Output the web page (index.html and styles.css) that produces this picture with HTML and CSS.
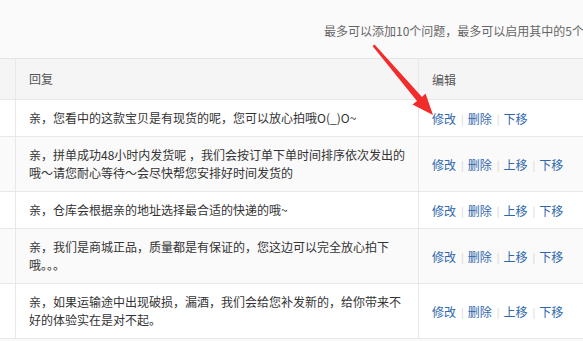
FILE: index.html
```html
<!DOCTYPE html>
<html lang="zh-CN">
<head>
<meta charset="utf-8">
<link rel="stylesheet" href="styles.css">
</head>
<body>
<div class="page">
  <div class="notice"><span>最多可以添加10个问题，最多可以启用其中的5个问题</span></div>
  <div class="table">
    <div class="row head">
      <div class="c-side"></div>
      <div class="c-main">回复</div>
      <div class="c-edit">编辑</div>
    </div>
    <div class="row">
      <div class="c-side"></div>
      <div class="c-main">亲，您看中的这款宝贝是有现货的呢，您可以放心拍哦O(_)O~</div>
      <div class="c-edit"><a>修改</a><i>|</i><a>删除</a><i>|</i><a>下移</a></div>
    </div>
    <div class="row alt">
      <div class="c-side"></div>
      <div class="c-main">亲，拼单成功48小时内发货呢 ，我们会按订单下单时间排序依次发出的哦～请您耐心等待～会尽快帮您安排好时间发货的</div>
      <div class="c-edit"><a>修改</a><i>|</i><a>删除</a><i>|</i><a>上移</a><i>|</i><a>下移</a></div>
    </div>
    <div class="row">
      <div class="c-side"></div>
      <div class="c-main">亲，仓库会根据亲的地址选择最合适的快递的哦~</div>
      <div class="c-edit"><a>修改</a><i>|</i><a>删除</a><i>|</i><a>上移</a><i>|</i><a>下移</a></div>
    </div>
    <div class="row alt">
      <div class="c-side"></div>
      <div class="c-main">亲，我们是商城正品，质量都是有保证的，您这边可以完全放心拍下哦。。。</div>
      <div class="c-edit"><a>修改</a><i>|</i><a>删除</a><i>|</i><a>上移</a><i>|</i><a>下移</a></div>
    </div>
    <div class="row">
      <div class="c-side"></div>
      <div class="c-main">亲，如果运输途中出现破损，漏酒，我们会给您补发新的，给你带来不好的体验实在是对不起。</div>
      <div class="c-edit"><a>修改</a><i>|</i><a>删除</a><i>|</i><a>上移</a><i>|</i><a>下移</a></div>
    </div>
  </div>
  <svg class="arrow" width="583" height="341" viewBox="0 0 583 341">
    <polygon points="372.5,46 374.5,44.5 422,97 425.5,93.5 433,115 412.5,104.5 417,101" fill="#f22b2b"/>
  </svg>
</div>
</body>
</html>
```
FILE: styles.css
```css
html, body {
  margin: 0;
  padding: 0;
}
body {
  background: #fafafa;
  font-family: "Noto Sans CJK SC", "Noto Sans", sans-serif;
  font-size: 12px;
  color: #333;
}
.page {
  position: relative;
  width: 583px;
  height: 341px;
  overflow: hidden;
}
.notice {
  height: 58px;
  display: flex;
  justify-content: flex-start;
  align-items: center;
  padding-left: 324px;
  padding-top: 2px;
  box-sizing: border-box;
  color: #666;
  white-space: nowrap;
  overflow: hidden;
}
.table {
  border-top: 1px solid #e6e6e6;
  background: #fff;
}
.row {
  display: flex;
  border-bottom: 1px solid #e8e8e8;
  background: #fff;
}
.row.alt {
  background: #fafafa;
}
.row.head {
  background: #f5f5f5;
  height: 40px;
  color: #555;
}
.row.head .c-main,
.row.head .c-edit {
  padding-top: 0;
  padding-bottom: 0;
  align-items: center;
}
.c-side {
  width: 15px;
  flex: none;
  border-right: 1px solid #e8e8e8;
}
.c-main {
  width: 376px;
  flex: none;
  padding: 9px 13px 9px 13px;
  line-height: 18px;
  border-right: 1px solid #e8e8e8;
  display: flex;
  align-items: center;
}
.row:not(.head) .c-main {
  display: block;
}
.c-edit {
  flex: 1;
  padding: 0 0 0 13px;
  display: flex;
  align-items: center;
  white-space: nowrap;
}
.c-edit a {
  color: #2f67ad;
}
.c-edit i {
  font-style: normal;
  color: #d0d0d0;
  font-size: 10px;
  margin: 0 4px 0 5px;
}
.arrow {
  position: absolute;
  left: 0;
  top: 0;
  pointer-events: none;
}
```
